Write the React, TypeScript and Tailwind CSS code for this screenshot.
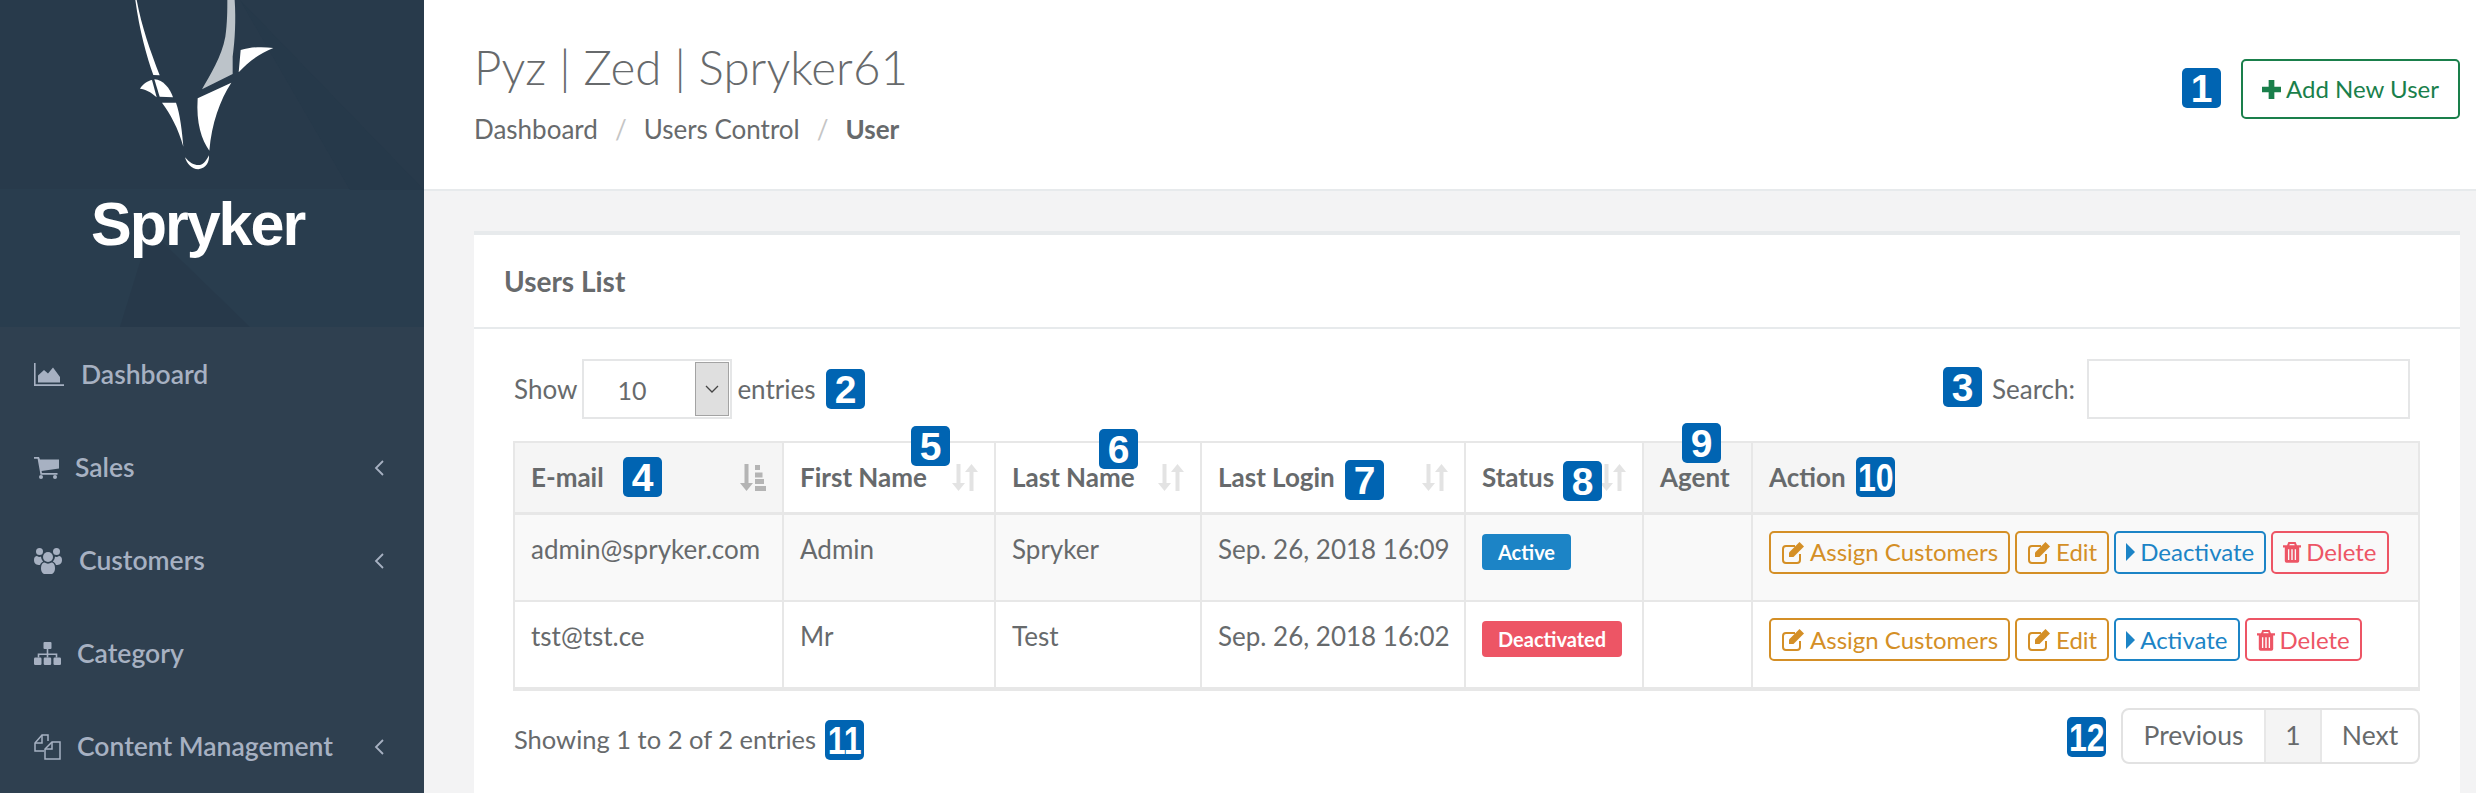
import type { ReactNode } from "react"

const FONT = "font-['Lato','Noto_Sans',sans-serif]"

function AreaIcon() {
  return (
    <svg viewBox="0 0 30 23" className="w-[30px] h-[23px]" fill="currentColor">
      <path d="M0 0h1.6v21.2H30V23H0z" />
      <path d="M4 19.500v-7l6-5.500 4 3.500 5-6 7 9.500v5.500z" />
    </svg>
  )
}

function CartIcon() {
  return (
    <svg viewBox="0 0 25 22" className="w-[25px] h-[22px]" fill="currentColor">
      <path d="M0 0h5l1 2.500h19v9L7.600 14l.4 2h15.500v1.800H6.500L3.600 1.800H0z" />
      <circle cx="7" cy="20" r="2" />
      <circle cx="21" cy="20" r="2" />
    </svg>
  )
}

function UsersIcon() {
  return (
    <svg viewBox="0 0 28 26" className="w-[28px] h-[26px]" fill="currentColor">
      <circle cx="5.500" cy="3.500" r="3.500" />
      <circle cx="22.500" cy="3.500" r="3.500" />
      <circle cx="14" cy="9" r="5" />
      <path d="M0 12c0-3 1.500-4 3-4 1 .8 2.500 1.200 4 .8.300 2 1 3.500 2.200 4.700C7.500 14.500 6.500 15.500 6 17c-3.500 0-6-1.200-6-5z" />
      <path d="M28 12c0-3-1.500-4-3-4-1 .8-2.500 1.200-4 .8-.3 2-1 3.500-2.200 4.700 1.700 1 2.700 2 3.200 3.500 3.500 0 6-1.200 6-5z" />
      <path d="M7 20c0-3.500 1.500-5.500 3.500-5.500 2 1.500 5 1.500 7 0 2 0 3.500 2 3.500 5.500 0 4-2 6-4 6h-6c-2 0-4-2-4-6z" />
    </svg>
  )
}

function SitemapIcon() {
  return (
    <svg viewBox="0 0 27 23" className="w-[27px] h-[23px]" fill="currentColor">
      <rect x="9.500" y="0" width="8" height="7" rx="1" />
      <path d="M12.700 7h1.600v4.500h9v4h-1.600v-2.400h-7.400v2.400h-1.600v-2.400H5.300v2.400H3.700v-4h9z" />
      <rect x="0" y="15.500" width="7.500" height="7.500" rx="1.200" />
      <rect x="9.700" y="15.500" width="7.500" height="7.500" rx="1.200" />
      <rect x="19.500" y="15.500" width="7.500" height="7.500" rx="1.200" />
    </svg>
  )
}

function FilesIcon() {
  return (
    <svg viewBox="0 0 27 26" className="w-[27px] h-[26px]" fill="none" stroke="currentColor" strokeWidth="1.500">
      <path d="M10 17H1V9l7-8h6v6" />
      <path d="M1 9h7V1" />
      <path d="M11 25h15V8h-8l-7 7z" />
      <path d="M11 15h7V8" />
    </svg>
  )
}

function EditIcon() {
  return (
    <svg viewBox="0 0 24 23" className="w-[24px] h-[23px] shrink-0" fill="currentColor">
      <path d="M19 13v6a3 3 0 0 1-3 3H5a3 3 0 0 1-3-3V8a3 3 0 0 1 3-3h9" fill="none" stroke="currentColor" strokeWidth="2" />
      <path d="M8 11.500 18.500 1 23 5.500 12.500 16H8z" />
    </svg>
  )
}

function CaretIcon() {
  return (
    <svg viewBox="0 0 9 18" className="w-[9px] h-[18px] shrink-0" fill="currentColor">
      <path d="M0 0l9 9-9 9z" />
    </svg>
  )
}

function TrashIcon() {
  return (
    <svg viewBox="0 0 20 24" className="w-[18px] h-[24px] shrink-0" fill="currentColor">
      <path
        fillRule="evenodd"
        d="M6 1h8l1.500 3.500H20V7h-2v15a2 2 0 0 1-2 2H4a2 2 0 0 1-2-2V7H0V4.500h4.500zM7.500 3 7 4.500h6L12.500 3zM5.500 9v12H7V9zm3.700 0v12h1.600V9zM13 9v12h1.500V9z"
      />
    </svg>
  )
}

function SortIcon() {
  return (
    <svg viewBox="0 0 26 27" className="w-[26px] h-[27px] text-[#e3e3e3]" fill="currentColor">
      <path d="M4.500 0h4v19H13l-6.500 8L0 19h4.500z" />
      <path d="M17.500 27h4V8H26L19.500 0 13 8h4.500z" />
    </svg>
  )
}

function SortAscIcon() {
  return (
    <svg viewBox="0 0 26 27" className="w-[26px] h-[27px] text-[#b4b4b4]" fill="currentColor">
      <path d="M4.500 0h4v19H13l-6.500 8L0 19h4.500z" />
      <path d="M15 1h5v5h-5zM15 8.500h7.500v5H15zM15 15h9v5h-9zM15 22h11v5H15z" />
    </svg>
  )
}

function Logo() {
  return (
    <svg viewBox="0 0 510 525" className="w-[170px] h-[175px] ml-[120px] shrink-0" fill="#fff">
      <path d="M46 0C58 90 80 170 100 225L119 226C90 150 65 80 50 0Z" />
      <path d="M60 266C68 252 85 242 96 240L110 292C92 275 75 268 60 266Z" />
      <path d="M103 238C130 240 150 265 159 292L119 290Z" />
      <path d="M126 308L168 308C180 340 187 400 190 440C175 385 150 340 126 308Z" />
      <path fill="#bcc3c9" d="M322 0L344 0C348 60 345 120 338 170L338 222L246 268C270 225 305 170 316 110C322 70 322 30 322 0Z" />
      <path d="M362 150C395 140 430 140 460 144C420 160 385 185 356 217Z" />
      <path d="M334 248C300 300 275 370 268 452C245 420 228 370 233 295Z" />
      <path d="M195 472C210 490 225 497 240 495C252 492 260 480 267 466C268 485 260 505 235 508C215 508 200 490 195 472Z" />
    </svg>
  )
}

const NAV = [
  { label: "Dashboard", icon: <AreaIcon />, gap: "gap-[17px]", arrow: false },
  { label: "Sales", icon: <CartIcon />, gap: "gap-[16px]", arrow: true },
  { label: "Customers", icon: <UsersIcon />, gap: "gap-[17px]", arrow: true },
  { label: "Category", icon: <SitemapIcon />, gap: "gap-[16px]", arrow: false },
  { label: "Content Management", icon: <FilesIcon />, gap: "gap-[16px]", arrow: true },
]

function Sidebar() {
  return (
    <aside className="w-[424px] shrink-0 bg-[#2f4050] text-[#a7b1c2] overflow-hidden">
      <div className="relative h-[327px] bg-[#283a4b] overflow-hidden">
        <svg viewBox="0 0 424 327" className="absolute inset-0 w-[424px] h-[327px]">
          <path d="M0 189H424V327H0Z" fill="#293d4e" />
          <path d="M240 0L424 190L350 190L240 0Z" fill="#26394a" />
          <path d="M150 230L250 327H120Z" fill="#27394a" />
        </svg>
        <div className="relative flex flex-col">
          <Logo />
          <div className="ml-[91px] mt-[13px] font-['Liberation_Sans',sans-serif] font-bold text-[61px] leading-[72px] tracking-[-2px] text-white">
            Spryker
          </div>
        </div>
      </div>
      <nav className="flex flex-col pt-[1px]">
        {NAV.map((n) => (
          <div key={n.label} className="h-[93px] pl-[34px] pr-[40px] flex items-center justify-between">
            <div className={`flex items-center ${n.gap}`}>
              {n.icon}
              <span className="text-[26.5px] font-semibold">{n.label}</span>
            </div>
            {n.arrow && (
              <svg viewBox="0 0 10 16" className="w-[10px] h-[16px]" fill="none" stroke="currentColor" strokeWidth="1.800">
                <path d="M9 1L2 8l7 7" />
              </svg>
            )}
          </div>
        ))}
      </nav>
    </aside>
  )
}

function Btn({ color, icon, label }: { color: string; icon: ReactNode; label: string }) {
  return (
    <button className={`h-[43px] px-[10px] flex items-center gap-[5px] border-2 rounded-[5px] text-[24px] ${color}`}>
      {icon}
      {label}
    </button>
  )
}

const ORANGE = "border-[#d48f26] text-[#d48f26]"
const BLUE = "border-[#1c84c6] text-[#1c84c6]"
const RED = "border-[#ed5565] text-[#ed5565]"

function Actions({ toggle }: { toggle: string }) {
  return (
    <div className="flex gap-[5px]">
      <Btn color={ORANGE} icon={<EditIcon />} label="Assign Customers" />
      <Btn color={ORANGE} icon={<EditIcon />} label="Edit" />
      <Btn color={BLUE} icon={<CaretIcon />} label={toggle} />
      <Btn color={RED} icon={<TrashIcon />} label="Delete" />
    </div>
  )
}

const TH = "border-2 border-[#e7e7e7] border-b-[3px] h-[71px] px-[16px] pt-[1px] text-left font-bold align-middle"
const TD = "border-2 border-[#e7e7e7] h-[88px] px-[16px] pt-[15px] align-top font-normal whitespace-nowrap"

function SortHead({ label, icon, bg }: { label: string; icon: ReactNode; bg?: string }) {
  return (
    <th className={`${TH} ${bg ?? ""}`}>
      <div className="flex items-center justify-between">
        <span>{label}</span>
        {icon}
      </div>
    </th>
  )
}

function UsersTable() {
  return (
    <table className="table-fixed w-[1905px] -ml-px border-collapse text-[26px] text-[#676a6c]">
      <colgroup>
        <col className="w-[269px]" />
        <col className="w-[212px]" />
        <col className="w-[206px]" />
        <col className="w-[264px]" />
        <col className="w-[178px]" />
        <col className="w-[109px]" />
        <col className="w-[667px]" />
      </colgroup>
      <thead>
        <tr>
          <SortHead label="E-mail" icon={<SortAscIcon />} bg="bg-[#f5f5f5]" />
          <SortHead label="First Name" icon={<SortIcon />} />
          <SortHead label="Last Name" icon={<SortIcon />} />
          <SortHead label="Last Login" icon={<SortIcon />} />
          <SortHead label="Status" icon={<SortIcon />} />
          <th className={`${TH} bg-[#f5f5f5]`}>Agent</th>
          <th className={`${TH} bg-[#f5f5f5]`}>Action</th>
        </tr>
      </thead>
      <tbody>
        <tr className="bg-[#f9f9f9]">
          <td className={TD}>admin@spryker.com</td>
          <td className={TD}>Admin</td>
          <td className={TD}>Spryker</td>
          <td className={TD}>Sep. 26, 2018 16:09</td>
          <td className={`${TD} pt-[16px]`}>
            <span className="inline-flex items-center h-[36px] px-[16px] rounded-[4px] bg-[#1c84c6] text-white text-[20px] font-bold">Active</span>
          </td>
          <td className={TD}></td>
          <td className={`${TD} pt-[16px]`}><Actions toggle="Deactivate" /></td>
        </tr>
        <tr>
          <td className={`${TD} border-b-4`}>tst@tst.ce</td>
          <td className={`${TD} border-b-4`}>Mr</td>
          <td className={`${TD} border-b-4`}>Test</td>
          <td className={`${TD} border-b-4`}>Sep. 26, 2018 16:02</td>
          <td className={`${TD} border-b-4 pt-[16px]`}>
            <span className="inline-flex items-center h-[36px] px-[16px] rounded-[4px] bg-[#ed5565] text-white text-[20px] font-bold">Deactivated</span>
          </td>
          <td className={`${TD} border-b-4`}></td>
          <td className={`${TD} border-b-4 pt-[16px]`}><Actions toggle="Activate" /></td>
        </tr>
      </tbody>
    </table>
  )
}

// numbered call-outs sit on top of the screenshot
const BADGES = [
  { n: "1", pos: "left-[2182px] top-[68px]" },
  { n: "2", pos: "left-[826px] top-[369px]" },
  { n: "3", pos: "left-[1943px] top-[367px]" },
  { n: "4", pos: "left-[623px] top-[457px]" },
  { n: "5", pos: "left-[911px] top-[426px]" },
  { n: "6", pos: "left-[1099px] top-[429px]" },
  { n: "7", pos: "left-[1345px] top-[460px]" },
  { n: "8", pos: "left-[1563px] top-[461px]" },
  { n: "9", pos: "left-[1682px] top-[423px]" },
  { n: "10", pos: "left-[1856px] top-[457px]" },
  { n: "11", pos: "left-[825px] top-[720px]" },
  { n: "12", pos: "left-[2067px] top-[717px]" },
]

function Badge({ n, pos }: { n: string; pos: string }) {
  return (
    <div className={`absolute ${pos} w-[39px] h-[40px] rounded-[5px] bg-[#0064b2] text-white flex items-center justify-center font-['Liberation_Sans',sans-serif] font-bold text-[39px] leading-none overflow-hidden`}>
      <span className={n.length > 1 ? "scale-x-[0.82]" : ""}>{n}</span>
    </div>
  )
}

function Main() {
  return (
    <main className="flex-1 min-w-0 bg-[#f3f3f4] text-[#676a6c] flex flex-col">
      <header className="h-[191px] shrink-0 bg-white border-b-2 border-[#e7eaec] pl-[50px] pr-[16px] flex justify-between">
        <div className="pt-[37px]">
          <h1 className="text-[47.5px] leading-[60px] font-light">Pyz | Zed | Spryker61</h1>
          <div className="mt-[17px] flex items-center text-[26px] leading-[30px]">
            <span>Dashboard</span>
            <span className="px-[17px] text-[#c5c5c5]">/</span>
            <span>Users Control</span>
            <span className="px-[17px] text-[#c5c5c5]">/</span>
            <span className="font-bold">User</span>
          </div>
        </div>
        <button className="mt-[59px] w-[219px] h-[60px] border-2 border-[#1a7f4b] rounded-[5px] text-[#1a7f4b] text-[24px] flex items-center justify-center gap-[5px]">
          <svg viewBox="0 0 20 20" className="w-[19px] h-[19px]" fill="currentColor">
            <path d="M7 0h6v7h7v6h-7v7H7v-7H0V7h7z" />
          </svg>
          Add New User
        </button>
      </header>
      <section className="mt-[40px] ml-[50px] mr-[16px] flex-1 bg-white border-t-4 border-[#e7eaec] flex flex-col">
        <div className="h-[94px] shrink-0 border-b-2 border-[#e7eaec] pl-[30px] flex items-center">
          <h2 className="text-[28px] font-bold">Users List</h2>
        </div>
        <div className="px-[40px] pt-[30px]">
          <div className="flex items-center justify-between pr-[10px] text-[26px]">
            <div className="flex items-center gap-[5px]">
              <span>Show</span>
              <div className="w-[150px] h-[60px] border-2 border-[#e5e6e7] flex items-stretch justify-between p-[1px]">
                <span className="pl-[32px] pt-[13px] text-[25px] leading-[30px]">10</span>
                <span className="w-[34px] bg-[#dfdfdf] border border-[#a3a3a3] flex items-center justify-center">
                  <svg viewBox="0 0 14 8" className="w-[14px] h-[8px]" fill="none" stroke="#444" strokeWidth="1.300">
                    <path d="M1 1l6 6 6-6" />
                  </svg>
                </span>
              </div>
              <span>entries</span>
            </div>
            <div className="flex items-center gap-[12px]">
              <span>Search:</span>
              <input className="w-[323px] h-[60px] border-2 border-[#e5e6e7] outline-none" />
            </div>
          </div>
          <div className="mt-[22px]">
            <UsersTable />
          </div>
          <div className="mt-[17px] flex items-start justify-between text-[25.5px]">
            <span className="pt-[12px]">Showing 1 to 2 of 2 entries</span>
            <div className="flex h-[56px] text-[26.5px] border-2 border-[#e2e2e2] rounded-[8px] overflow-hidden">
              <span className="w-[141px] flex items-center justify-center">Previous</span>
              <span className="w-[58px] flex items-center justify-center bg-[#f4f4f4] border-x-2 border-[#e7e7e7]">1</span>
              <span className="w-[96px] flex items-center justify-center">Next</span>
            </div>
          </div>
        </div>
      </section>
    </main>
  )
}

export default function App() {
  return (
    <div className={`relative flex w-[2476px] h-[793px] overflow-hidden ${FONT}`}>
      <Sidebar />
      <Main />
      {BADGES.map((b) => (
        <Badge key={b.n} n={b.n} pos={b.pos} />
      ))}
    </div>
  )
}
